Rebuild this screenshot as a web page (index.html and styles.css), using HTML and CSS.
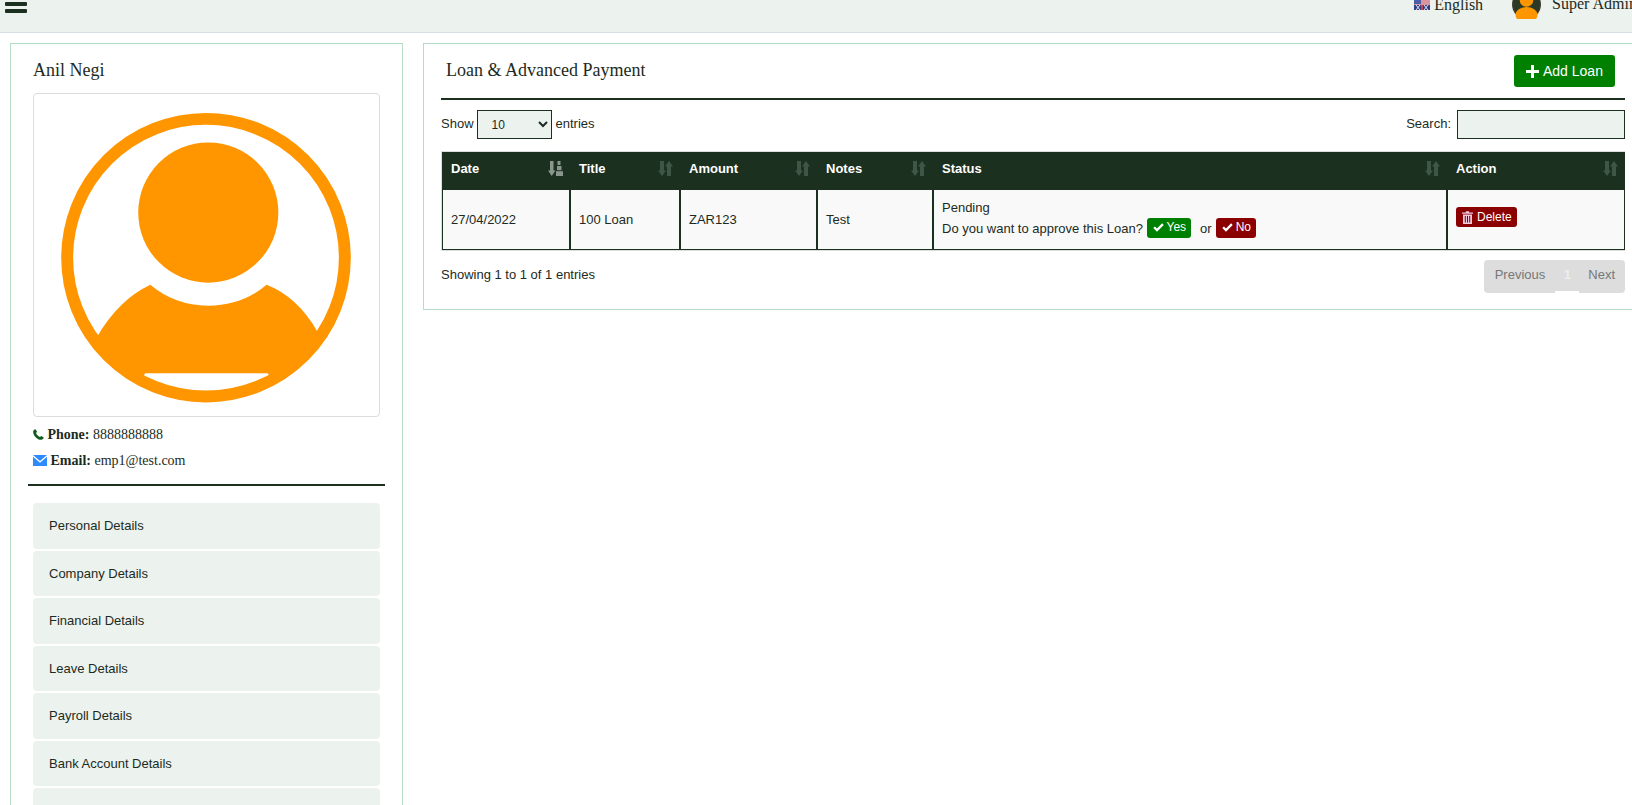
FILE: index.html
```html
<!DOCTYPE html>
<html lang="en">
<head>
<meta charset="utf-8">
<title>Loan &amp; Advanced Payment</title>
<link rel="stylesheet" href="styles.css">
</head>
<body>
<svg class="defs" width="0" height="0" aria-hidden="true">
  <symbol id="sort" viewBox="0 0 15 15"><path d="M2 0h4v9.500h2L4 15 0 9.500h2zM11 0l4 5.500h-2V15H9V5.500H7z"/></symbol>
  <symbol id="sorted" viewBox="0 0 15 15"><path d="M2 0h3.500v9.500h2L3.700 15 0 9.500h2zM9.500 0h3v4h-3zM9 5h4.500v4.200H9zM8 10.200h7V15H8z"/></symbol>
  <symbol id="check" viewBox="0 0 12 10"><path d="M4.300 9.800.2 5.600l1.800-1.800 2.300 2.300L10 .3l1.800 1.800z"/></symbol>
</svg>
<header class="topbar">
  <div class="topbar-row">
    <div class="burger"><span></span><span></span><span></span></div>
    <div class="lang">
      <svg class="flag" viewBox="0 0 16 11"><rect width="16" height="11" fill="#ece6ea"/><path d="M6 1h10M6 3h10M0 5h16" stroke="#c8434e" stroke-width="1"/><rect width="7" height="5" fill="#4a5fa8"/><rect y="6" width="16" height="5" fill="#2e3f86"/><path d="M2 6l4 5M6 6l-4 5M10 6l4 5M14 6l-4 5" stroke="#e9e4ea" stroke-width="1"/><path d="M8 6v5" stroke="#c8434e" stroke-width="2"/></svg>
      <span>English</span>
    </div>
    <div class="user">
      <svg class="mini-avatar" viewBox="0 0 29 29"><circle cx="14.500" cy="14.500" r="14.500" fill="#3d3a28"/><circle cx="14.500" cy="14.500" r="12.800" fill="#2c3a25"/><ellipse cx="14.500" cy="25" rx="11" ry="8" fill="#ff9600"/><circle cx="14.500" cy="10" r="6.800" fill="#ff9600"/></svg>
      <span>Super Admin</span>
    </div>
  </div>
</header>

<div class="page">
  <aside class="side card">
    <h2 class="name">Anil Negi</h2>
    <div class="photo">
      <svg class="photo-img" viewBox="33 93 347 324">
        <path d="M96 338Q118 300 150 285Q175 306 208 306Q242 306 267 285Q298 297 318 332L327 334L290 374L272 379L268 374H145L141 379L122 374L85 334Z" fill="#ff9600"/>
        <circle cx="208.300" cy="212.300" r="70.500" fill="#ff9600"/>
        <circle cx="206" cy="257.700" r="139.700" fill="none" stroke="#ff9600" stroke-width="12"/>
      </svg>
    </div>
    <div class="contacts">
      <p class="contact"><svg class="ico-phone" viewBox="0 0 12 12"><path d="M2.600.3 4.500 3 3.300 4.300c.6 1.800 2.300 3.600 4.300 4.400L9 7.500l2.700 1.900c-.3 1.500-1.400 2.400-2.700 2.400C4.500 11.800.2 7.500.2 3 .2 1.700 1.100.6 2.600.3z"/></svg> <b>Phone:</b> 8888888888</p>
      <p class="contact"><svg class="ico-mail" viewBox="0 0 14 11"><path d="M0 0h14L7 6zM0 1.800l7 6 7-6V11H0z"/></svg> <b>Email:</b> emp1@test.com</p>
    </div>
    <hr class="rule side-rule">
    <nav class="menu">
      <a class="menu-item">Personal Details</a>
      <a class="menu-item">Company Details</a>
      <a class="menu-item">Financial Details</a>
      <a class="menu-item">Leave Details</a>
      <a class="menu-item">Payroll Details</a>
      <a class="menu-item">Bank Account Details</a>
      <a class="menu-item"></a>
    </nav>
  </aside>

  <main class="main card">
    <div class="head">
      <h2 class="title">Loan &amp; Advanced Payment</h2>
      <button class="add-btn"><svg class="ico-plus" viewBox="0 0 13 13"><path d="M5 0h3v5h5v3H8v5H5V8H0V5h5z"/></svg>Add Loan</button>
    </div>
    <hr class="rule">
    <div class="controls">
      <label class="show">Show
        <select class="entries"><option>10</option></select>
        entries</label>
      <label class="search">Search: <input class="search-input" type="text"></label>
    </div>
    <div class="table-wrap">
      <table class="grid">
        <colgroup>
          <col class="c-date"><col class="c-title"><col class="c-amount"><col class="c-notes"><col class="c-status"><col class="c-action">
        </colgroup>
        <thead>
          <tr>
            <th><div class="th-in">Date<svg class="sort-on"><use href="#sorted"/></svg></div></th>
            <th><div class="th-in">Title<svg class="sort-off"><use href="#sort"/></svg></div></th>
            <th><div class="th-in">Amount<svg class="sort-off"><use href="#sort"/></svg></div></th>
            <th><div class="th-in">Notes<svg class="sort-off"><use href="#sort"/></svg></div></th>
            <th><div class="th-in">Status<svg class="sort-off"><use href="#sort"/></svg></div></th>
            <th><div class="th-in">Action<svg class="sort-off"><use href="#sort"/></svg></div></th>
          </tr>
        </thead>
        <tbody>
          <tr>
            <td>27/04/2022</td>
            <td>100 Loan</td>
            <td>ZAR123</td>
            <td>Test</td>
            <td class="status">
              <div class="status-line">Pending</div>
              <div class="status-line">Do you want to approve this Loan? <a class="tag tag-green"><svg class="ico-check"><use href="#check"/></svg>Yes</a><span class="or">or</span><a class="tag tag-red"><svg class="ico-check"><use href="#check"/></svg>No</a></div>
            </td>
            <td class="action"><a class="tag tag-red tag-del"><svg class="ico-trash" viewBox="0 0 11 13"><path d="M3.500 1.500 4.200.3h2.600l.7 1.200H11v1.200H0V1.500zM1 3.500h9V13H1zM2.800 5v6.500h1V5zm2.200 0v6.500h1V5zm2.200 0v6.500h1V5z" fill-rule="evenodd"/></svg>Delete</a></td>
          </tr>
        </tbody>
      </table>
    </div>
    <div class="foot">
      <div class="info">Showing 1 to 1 of 1 entries</div>
      <div class="pager">
        <a class="pg">Previous</a>
        <a class="pg pg-current">1</a>
        <a class="pg pg-next">Next</a>
      </div>
    </div>
  </main>
</div>
</body>
</html>
```

FILE: styles.css
```css
html, body {
  margin: 0;
  height: 805px;
  overflow: hidden;
  background: #fff;
}
body {
  font-family: "Liberation Sans", Arial, sans-serif;
  font-size: 13px;
  color: #1c2b22;
}
.defs { position: absolute; }

/* top bar */
.topbar {
  height: 32px;
  background: #ecf2ee;
  border-bottom: 1px solid #d6dde6;
  overflow: hidden;
  font-family: "Liberation Serif", "Times New Roman", serif;
  font-size: 16px;
}
.topbar-row {
  display: flex;
  align-items: center;
  height: 29px;
  margin: -10px -5px 0 5px;
}
.burger {
  display: flex;
  flex-direction: column;
  gap: 3px;
  margin-top: -1px;
}
.burger span {
  display: block;
  width: 22px;
  height: 4px;
  background: #1c3020;
  border-radius: 1px;
}
.lang {
  display: flex;
  align-items: center;
  gap: 4px;
  margin-left: auto;
  line-height: 27px;
}
.lang span, .user span { margin-top: -1px; }
.flag { width: 16px; height: 11px; display: block; }
.user {
  display: flex;
  align-items: center;
  gap: 11px;
  margin-left: 29px;
  flex-shrink: 0;
}
.mini-avatar { width: 29px; height: 29px; display: block; }

/* layout */
.page {
  display: flex;
  align-items: flex-start;
  gap: 20px;
  padding-top: 10px;
  margin: 0 -11px 0 10px;
}
.card {
  background: #fff;
  border: 1px solid #b5dcc5;
}
.side {
  width: 347px;
  flex-shrink: 0;
  padding: 14px 22px 20px;
}
.main {
  flex: 1;
  min-width: 0;
  padding: 11px 17px 16px;
}
.name, .title {
  font-family: "Liberation Serif", "Times New Roman", serif;
  font-size: 18px;
  font-weight: 400;
  line-height: 24px;
  margin: 0;
}
.name { margin-bottom: 11px; }

/* profile */
.photo {
  height: 322px;
  border: 1px solid #dcdcdc;
  border-radius: 4px;
}
.photo-img { display: block; width: 345px; height: 322px; }
.contacts { margin-top: 5px; }
.contact {
  margin: 0;
  line-height: 26px;
  font-family: "Liberation Serif", "Times New Roman", serif;
  font-size: 14px;
}
.ico-phone { width: 11px; height: 11px; fill: #0f5c1c; vertical-align: -1px; }
.ico-mail { width: 14px; height: 11px; fill: #2e8bff; vertical-align: -1px; }
.rule {
  height: 2px;
  margin: 0;
  border: 0;
  background: #1c3020;
}
.side-rule { margin: 10px -5px 17px; }

/* menu */
.menu {
  display: flex;
  flex-direction: column;
  gap: 2px;
}
.menu-item {
  display: flex;
  align-items: center;
  height: 45.5px;
  flex-shrink: 0;
  padding-left: 16px;
  background: #ecf2ee;
  border-radius: 4px;
  font-size: 13px;
}

/* main head */
.head {
  display: flex;
  align-items: flex-start;
  justify-content: space-between;
  padding: 0 10px 11px 5px;
}
.title { margin-top: 3px; }
.add-btn {
  display: flex;
  align-items: center;
  gap: 4px;
  width: 101px;
  height: 32px;
  padding: 0 0 0 12px;
  border: 0;
  border-radius: 3px;
  background: #008000;
  color: #fff;
  font: 14px "Liberation Sans", Arial, sans-serif;
}
.ico-plus { width: 13px; height: 13px; fill: #fff; }

/* controls */
.controls {
  display: flex;
  align-items: flex-start;
  justify-content: space-between;
  margin: 10px 0 12px;
  height: 29px;
  line-height: 28px;
}
.show { display: flex; align-items: flex-start; gap: 3px; }
.entries {
  width: 75px;
  height: 29px;
  margin: 0 1px 0 0;
  padding: 0 0 0 10px;
  background-color: #ecf2ee;
  border: 1px solid #1c3020;
  border-radius: 0;
  font: 12px "Liberation Sans", Arial, sans-serif;
  color: #1c2b22;
}
.search { display: flex; align-items: flex-start; gap: 6px; }
.search-input {
  width: 168px;
  height: 29px;
  box-sizing: border-box;
  margin: 0;
  background: #ecf2ee;
  border: 1px solid #1c3020;
  border-radius: 0;
}

/* table */
.table-wrap {
  border: 1px solid #ddd;
  border-right: 0;
}
.grid {
  width: 100%;
  table-layout: fixed;
  border-collapse: separate;
  border-spacing: 0;
}
.c-date { width: 128px; }
.c-title { width: 110px; }
.c-amount { width: 137px; }
.c-notes { width: 116px; }
.c-status { width: 514px; }
.grid th {
  box-sizing: border-box;
  height: 38px;
  padding: 0 7px 5px 9px;
  background: #1c3020;
  color: #fff;
  font-size: 13px;
  text-align: left;
}
.th-in {
  display: flex;
  align-items: center;
  justify-content: space-between;
}
.sort-off { width: 15px; height: 15px; fill: #3f5545; flex-shrink: 0; }
.sort-on { width: 15px; height: 15px; fill: #8a968d; flex-shrink: 0; }
.grid td {
  box-sizing: border-box;
  height: 60px;
  padding: 0 8px;
  background: #f9f9f9;
  border: 1px solid #1c3020;
  border-top: 0;
  font-size: 13px;
  vertical-align: middle;
}
.grid td.status { padding: 0 8px 4px; }
.status-line { line-height: 21px; }
.grid td.action { vertical-align: top; padding-top: 17px; }
.tag {
  display: inline-flex;
  align-items: center;
  gap: 3px;
  height: 20px;
  padding: 0 5px 0 6px;
  border-radius: 3px;
  color: #fff;
  font-size: 12px;
  vertical-align: middle;
  box-sizing: border-box;
  margin-top: -3px;
}
.tag-green { background: #008000; }
.tag-red { background: #8b0000; }
.ico-check { width: 11px; height: 9px; fill: #fff; }
.ico-trash { width: 11px; height: 13px; fill: #f0c9dd; }
.or { margin: 0 4px 0 9px; }
.tag-del { padding: 0 5px 0 6px; gap: 4px; margin-top: 0; }

/* footer */
.foot {
  display: flex;
  align-items: flex-start;
  justify-content: space-between;
  margin-top: 9px;
}
.info { line-height: 30px; }
.pager {
  display: flex;
  height: 33px;
  background: #ddd;
  border-radius: 4px;
  color: #777;
  line-height: 30px;
  padding: 0 10px 0 11px;
}
.pg-current {
  width: 24px;
  margin: 0 9px 0 10px;
  text-align: center;
  color: #eee;
  font-weight: 700;
  border-bottom: 2px solid #fff;
  height: 31px;
}
```
